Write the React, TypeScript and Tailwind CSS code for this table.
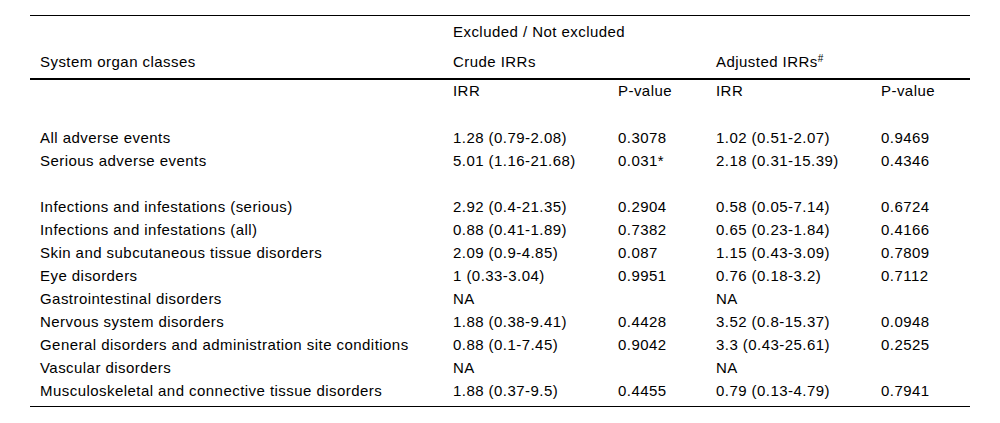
type Row = { label: string; irr1?: string; p1?: string; irr2?: string; p2?: string } | null;

const rows: Row[] = [
  { label: 'All adverse events', irr1: '1.28 (0.79-2.08)', p1: '0.3078', irr2: '1.02 (0.51-2.07)', p2: '0.9469' },
  { label: 'Serious adverse events', irr1: '5.01 (1.16-21.68)', p1: '0.031*', irr2: '2.18 (0.31-15.39)', p2: '0.4346' },
  null,
  { label: 'Infections and infestations (serious)', irr1: '2.92 (0.4-21.35)', p1: '0.2904', irr2: '0.58 (0.05-7.14)', p2: '0.6724' },
  { label: 'Infections and infestations (all)', irr1: '0.88 (0.41-1.89)', p1: '0.7382', irr2: '0.65 (0.23-1.84)', p2: '0.4166' },
  { label: 'Skin and subcutaneous tissue disorders', irr1: '2.09 (0.9-4.85)', p1: '0.087', irr2: '1.15 (0.43-3.09)', p2: '0.7809' },
  { label: 'Eye disorders', irr1: '1 (0.33-3.04)', p1: '0.9951', irr2: '0.76 (0.18-3.2)', p2: '0.7112' },
  { label: 'Gastrointestinal disorders', irr1: 'NA', irr2: 'NA' },
  { label: 'Nervous system disorders', irr1: '1.88 (0.38-9.41)', p1: '0.4428', irr2: '3.52 (0.8-15.37)', p2: '0.0948' },
  { label: 'General disorders and administration site conditions', irr1: '0.88 (0.1-7.45)', p1: '0.9042', irr2: '3.3 (0.43-25.61)', p2: '0.2525' },
  { label: 'Vascular disorders', irr1: 'NA', irr2: 'NA' },
  { label: 'Musculoskeletal and connective tissue disorders', irr1: '1.88 (0.37-9.5)', p1: '0.4455', irr2: '0.79 (0.13-4.79)', p2: '0.7941' },
];

export default function App() {
  return (
    <div className="w-[1000px] h-[423px] bg-white pt-[15px] pl-[30px] text-black text-[15px] tracking-[0.45px] font-['Liberation_Sans',Arial,sans-serif]">
      <table className="w-[940px] table-fixed border-collapse">
        <colgroup>
          <col className="w-[413px]" />
          <col className="w-[165px]" />
          <col className="w-[98px]" />
          <col className="w-[165px]" />
          <col className="w-[99px]" />
        </colgroup>
        <thead>
          <tr className="h-[32px] border-t border-black">
            <th className="pl-[10px]" />
            <th colSpan={4} className="pl-[10px] text-left font-normal">Excluded / Not excluded</th>
          </tr>
          <tr className="h-[31px] border-b-2 border-black">
            <th className="pl-[10px] text-left font-normal">System organ classes</th>
            <th colSpan={2} className="pl-[10px] text-left font-normal">Crude IRRs</th>
            <th colSpan={2} className="pl-[10px] text-left font-normal">
              Adjusted IRRs<sup className="text-[10px] tracking-normal">#</sup>
            </th>
          </tr>
        </thead>
        <tbody>
          <tr className="h-[25px]">
            <td className="pl-[10px]" />
            <td className="pl-[10px]">IRR</td>
            <td className="pl-[10px]">P-value</td>
            <td className="pl-[10px]">IRR</td>
            <td className="pl-[10px]">P-value</td>
          </tr>
          <tr className="h-[23px]"><td colSpan={5} /></tr>
          {rows.map((r, i) =>
            r ? (
              <tr key={i} className="h-[23px]">
                <td className="pl-[10px] whitespace-nowrap">{r.label}</td>
                <td className="pl-[10px] whitespace-nowrap">{r.irr1}</td>
                <td className="pl-[10px]">{r.p1}</td>
                <td className="pl-[10px] whitespace-nowrap">{r.irr2}</td>
                <td className="pl-[10px]">{r.p2}</td>
              </tr>
            ) : (
              <tr key={i} className="h-[23px]"><td colSpan={5} /></tr>
            )
          )}
          <tr className="h-[4px] border-b border-black"><td colSpan={5} /></tr>
        </tbody>
      </table>
    </div>
  );
}
